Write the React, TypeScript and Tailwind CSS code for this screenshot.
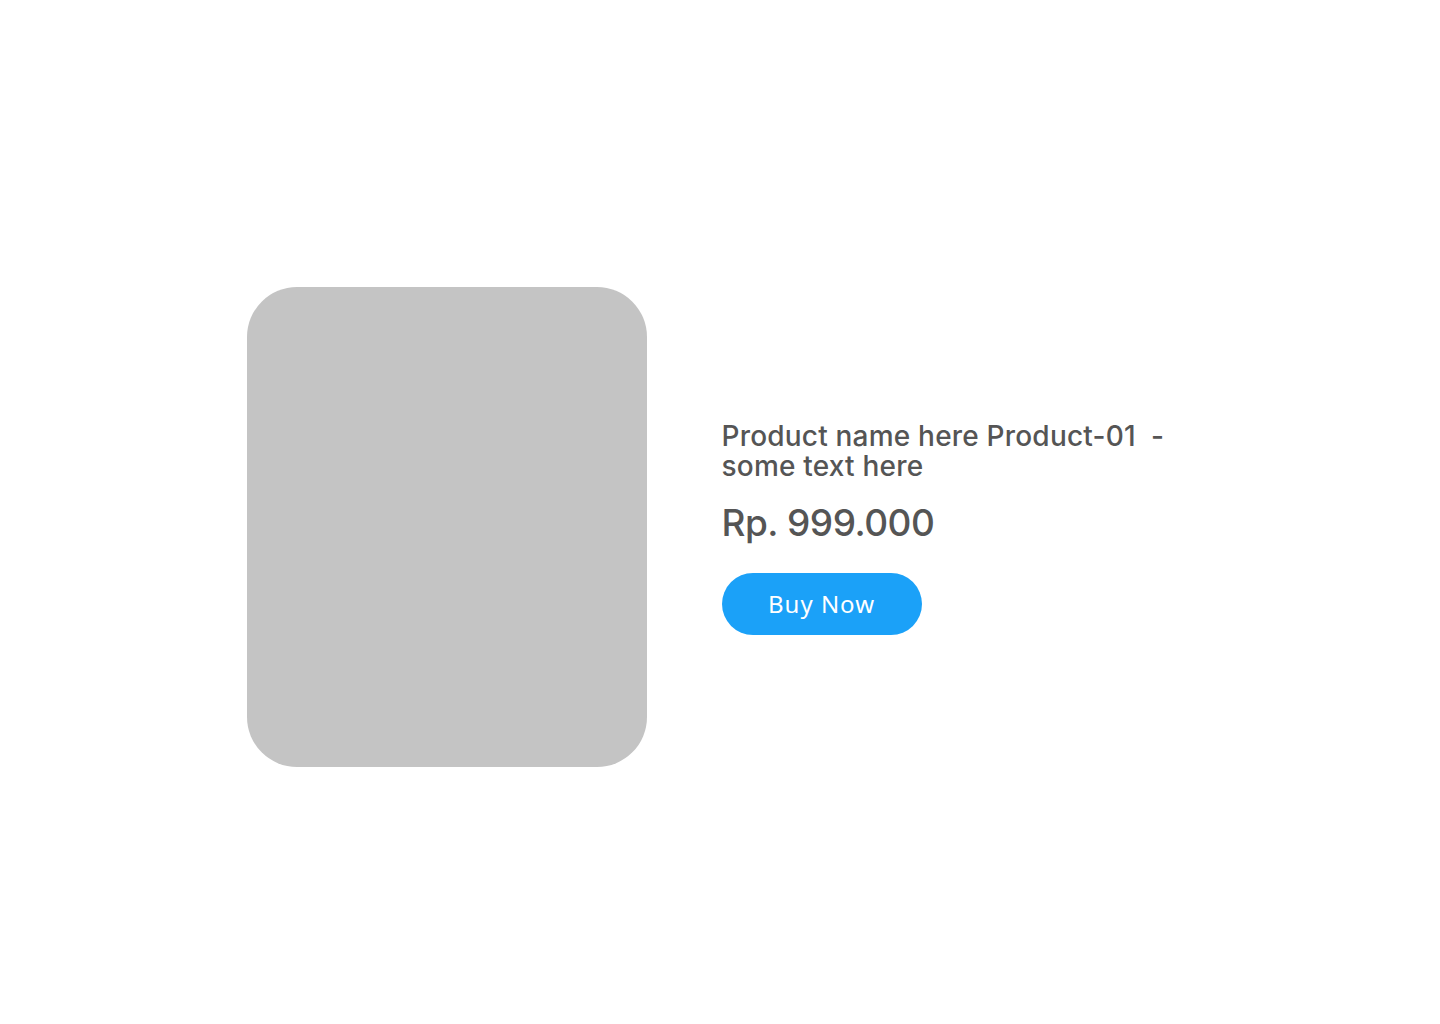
export default function App() {
  return (
    <div className="w-[1440px] h-[1024px] bg-white flex items-center justify-center" style={{ fontFamily: 'Inter, "Liberation Sans", Arial, sans-serif' }}>
      <div className="flex items-center gap-[75px] translate-y-[15px] -translate-x-[1px]">
        <div className="w-[400px] h-[480px] rounded-[50px] bg-[#c4c4c4]" />
        <div className="w-[470px] flex flex-col items-start pt-[2px]">
          <h1 className="text-[28px] leading-[30px] text-[#555555] font-medium tracking-[0.2px]">
            Product name here Product-01&nbsp; - some text here
          </h1>
          <p className="mt-[20px] text-[37px] leading-[44px] text-[#555555] font-medium tracking-[-0.5px]">Rp. 999.000</p>
          <button className="mt-[28px] w-[200px] h-[62px] rounded-full bg-[#1ba1f8] text-white text-[24px] tracking-[1px]" style={{ fontFamily: '"Noto Sans", sans-serif' }}>
            Buy Now
          </button>
        </div>
      </div>
    </div>
  );
}
